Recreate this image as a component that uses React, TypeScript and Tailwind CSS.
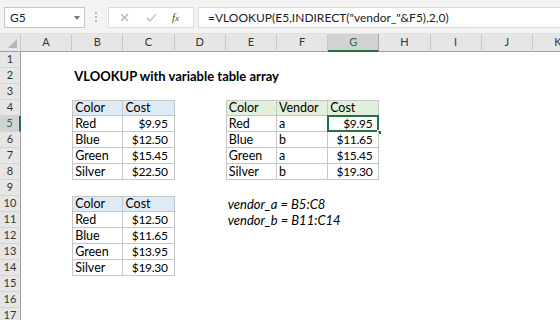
import React from 'react';

const cols = ['A', 'B', 'C', 'D', 'E', 'F', 'G', 'H', 'I', 'J', 'K'];

type Cell = {
  text?: string;
  right?: boolean;
  bold?: boolean;
  italic?: boolean;
  fill?: string;
  table?: { top?: boolean; left?: boolean };
};

const blue = 'bg-[#ddebf7]';
const green = 'bg-[#e2efda]';

function buildCells() {
  const m: Record<string, Cell> = {};
  m['B2'] = { text: 'VLOOKUP with variable table array', bold: true };

  const t1 = [
    ['Red', '$9.95'],
    ['Blue', '$12.50'],
    ['Green', '$15.45'],
    ['Silver', '$22.50'],
  ];
  const t3 = [
    ['Red', '$12.50'],
    ['Blue', '$11.65'],
    ['Green', '$13.95'],
    ['Silver', '$19.30'],
  ];
  const t2 = [
    ['Red', 'a', '$9.95'],
    ['Blue', 'b', '$11.65'],
    ['Green', 'a', '$15.45'],
    ['Silver', 'b', '$19.30'],
  ];

  const addTwo = (start: number, rows: string[][]) => {
    m['B' + start] = { text: 'Color', fill: blue, table: { top: true, left: true } };
    m['C' + start] = { text: 'Cost', fill: blue, table: { top: true } };
    rows.forEach((r, i) => {
      m['B' + (start + 1 + i)] = { text: r[0], table: { left: true } };
      m['C' + (start + 1 + i)] = { text: r[1], right: true, table: {} };
    });
  };
  addTwo(4, t1);
  addTwo(10, t3);

  m['E4'] = { text: 'Color', fill: green, table: { top: true, left: true } };
  m['F4'] = { text: 'Vendor', fill: green, table: { top: true } };
  m['G4'] = { text: 'Cost', fill: green, table: { top: true } };
  t2.forEach((r, i) => {
    m['E' + (5 + i)] = { text: r[0], table: { left: true } };
    m['F' + (5 + i)] = { text: r[1], table: {} };
    m['G' + (5 + i)] = { text: r[2], right: true, table: {} };
  });

  m['E10'] = { text: 'vendor_a = B5:C8', italic: true };
  m['E11'] = { text: 'vendor_b = B11:C14', italic: true };
  return m;
}

const cells = buildCells();

function Toolbar() {
  return (
    <div className="h-[34px] bg-[#f3f3f3] flex items-start pt-[7px] border-b border-[#e1e1e1]">
      <div className="ml-[4px] w-[81px] h-[21px] bg-white border border-[#c6c6c6] flex items-center justify-between pl-[5px] pr-[4px]">
        <span className="text-[12px] text-[#222]">G5</span>
        <span className="w-0 h-0 border-l-[3.5px] border-r-[3.5px] border-t-[4px] border-l-transparent border-r-transparent border-t-[#777]" />
      </div>
      <div className="ml-[10px] mt-[5px] flex flex-col gap-[2px]">
        <span className="w-[2px] h-[2px] bg-[#bbb]" />
        <span className="w-[2px] h-[2px] bg-[#bbb]" />
        <span className="w-[2px] h-[2px] bg-[#bbb]" />
      </div>
      <div className="ml-[11px] w-[86px] h-[21px] bg-white border border-[#dcdcdc] flex items-center">
        <svg className="ml-[11px]" width="9" height="9" viewBox="0 0 9 9">
          <path d="M1 1 L8 8 M8 1 L1 8" stroke="#aaa" strokeWidth="1.1" />
        </svg>
        <svg className="ml-[17px]" width="11" height="9" viewBox="0 0 11 9">
          <path d="M1 5 L4 8 L10 1" stroke="#aaa" strokeWidth="1.1" fill="none" />
        </svg>
        <span className="ml-[15px] text-[11px] italic text-[#444] font-['Liberation_Serif',serif]">
          f<span className="text-[9px]">x</span>
        </span>
      </div>
      <div className="ml-[4px] flex-1 h-[21px] bg-white border border-[#dcdcdc] border-r-0 flex items-center pl-[9px]">
        <span className="text-[12px] text-[#222] whitespace-nowrap">=VLOOKUP(E5,INDIRECT("vendor_"&amp;F5),2,0)</span>
      </div>
    </div>
  );
}

function CornerTriangle() {
  return (
    <div className="h-[18px] bg-[#e6e6e6] border-b border-r border-b-[#9f9f9f] border-r-[#c8c8c8] flex items-end justify-end pr-[3px] pb-[3px]">
      <svg width="9" height="9" viewBox="0 0 9 9">
        <path d="M9 0 L9 9 L0 9 Z" fill="#b7b7b7" />
      </svg>
    </div>
  );
}

function SheetCell({ id }: { id: string }) {
  const c = cells[id];
  const selected = id === 'G5';
  if (!c) {
    return <div className="h-[16px] bg-white" />;
  }
  const cls = [
    'h-[16px] relative flex items-center whitespace-nowrap leading-[16px] text-black',
    c.fill ?? 'bg-white',
    c.right ? 'justify-end pr-[6px] text-[12px] tracking-[-0.3px]' : 'pl-[2px]',
    c.bold ? 'font-bold text-[13px]' : '',
    c.italic ? 'italic text-[13px]' : '',
    !c.right && !c.bold && !c.italic ? 'text-[12.5px]' : '',
    c.table ? 'border-r border-b border-[#c6c6c6]' : '',
    c.table?.top ? 'border-t' : '',
    c.table?.left ? 'border-l' : '',
  ].join(' ');
  return (
    <div className={cls}>
      <span>{c.text}</span>
      {selected && (
        <>
          <span className="absolute -left-[1px] -top-[1px] -right-[1px] -bottom-[1px] border-2 border-[#217346]" />
          <span className="absolute -right-[4px] -bottom-[4px] w-[5px] h-[5px] bg-[#217346] border border-white" />
        </>
      )}
    </div>
  );
}

export default function App() {
  const rows = Array.from({ length: 17 }, (_, i) => i + 1);
  return (
    <div className="w-[560px] h-[320px] overflow-hidden bg-white font-['Lato','Open_Sans',sans-serif]">
      <Toolbar />
      <div className="grid grid-cols-[21px_repeat(11,51.2px)]">
        <CornerTriangle />
        {cols.map(col => (
          <div
            key={col}
            className={`h-[18px] flex items-center justify-center text-[11px] border-r border-b ${
              col === 'G'
                ? 'bg-[#d2d2d2] text-[#217346] border-r-[#ababab] border-b-2 border-b-[#217346]'
                : 'bg-[#e6e6e6] text-[#333] border-r-[#c8c8c8] border-b-[#9f9f9f]'
            }`}
          >
            {col}
          </div>
        ))}
        {rows.map(r => (
          <React.Fragment key={r}>
            <div
              className={`h-[16px] flex items-center justify-center text-[11px] border-b border-b-[#d4d4d4] border-r ${
                r === 5
                  ? 'bg-[#d2d2d2] text-[#217346] border-r-2 border-r-[#217346]'
                  : 'bg-[#e6e6e6] text-[#333] border-r-[#9f9f9f]'
              }`}
            >
              {r}
            </div>
            {cols.map(col => (
              <SheetCell key={col + r} id={col + r} />
            ))}
          </React.Fragment>
        ))}
      </div>
    </div>
  );
}
